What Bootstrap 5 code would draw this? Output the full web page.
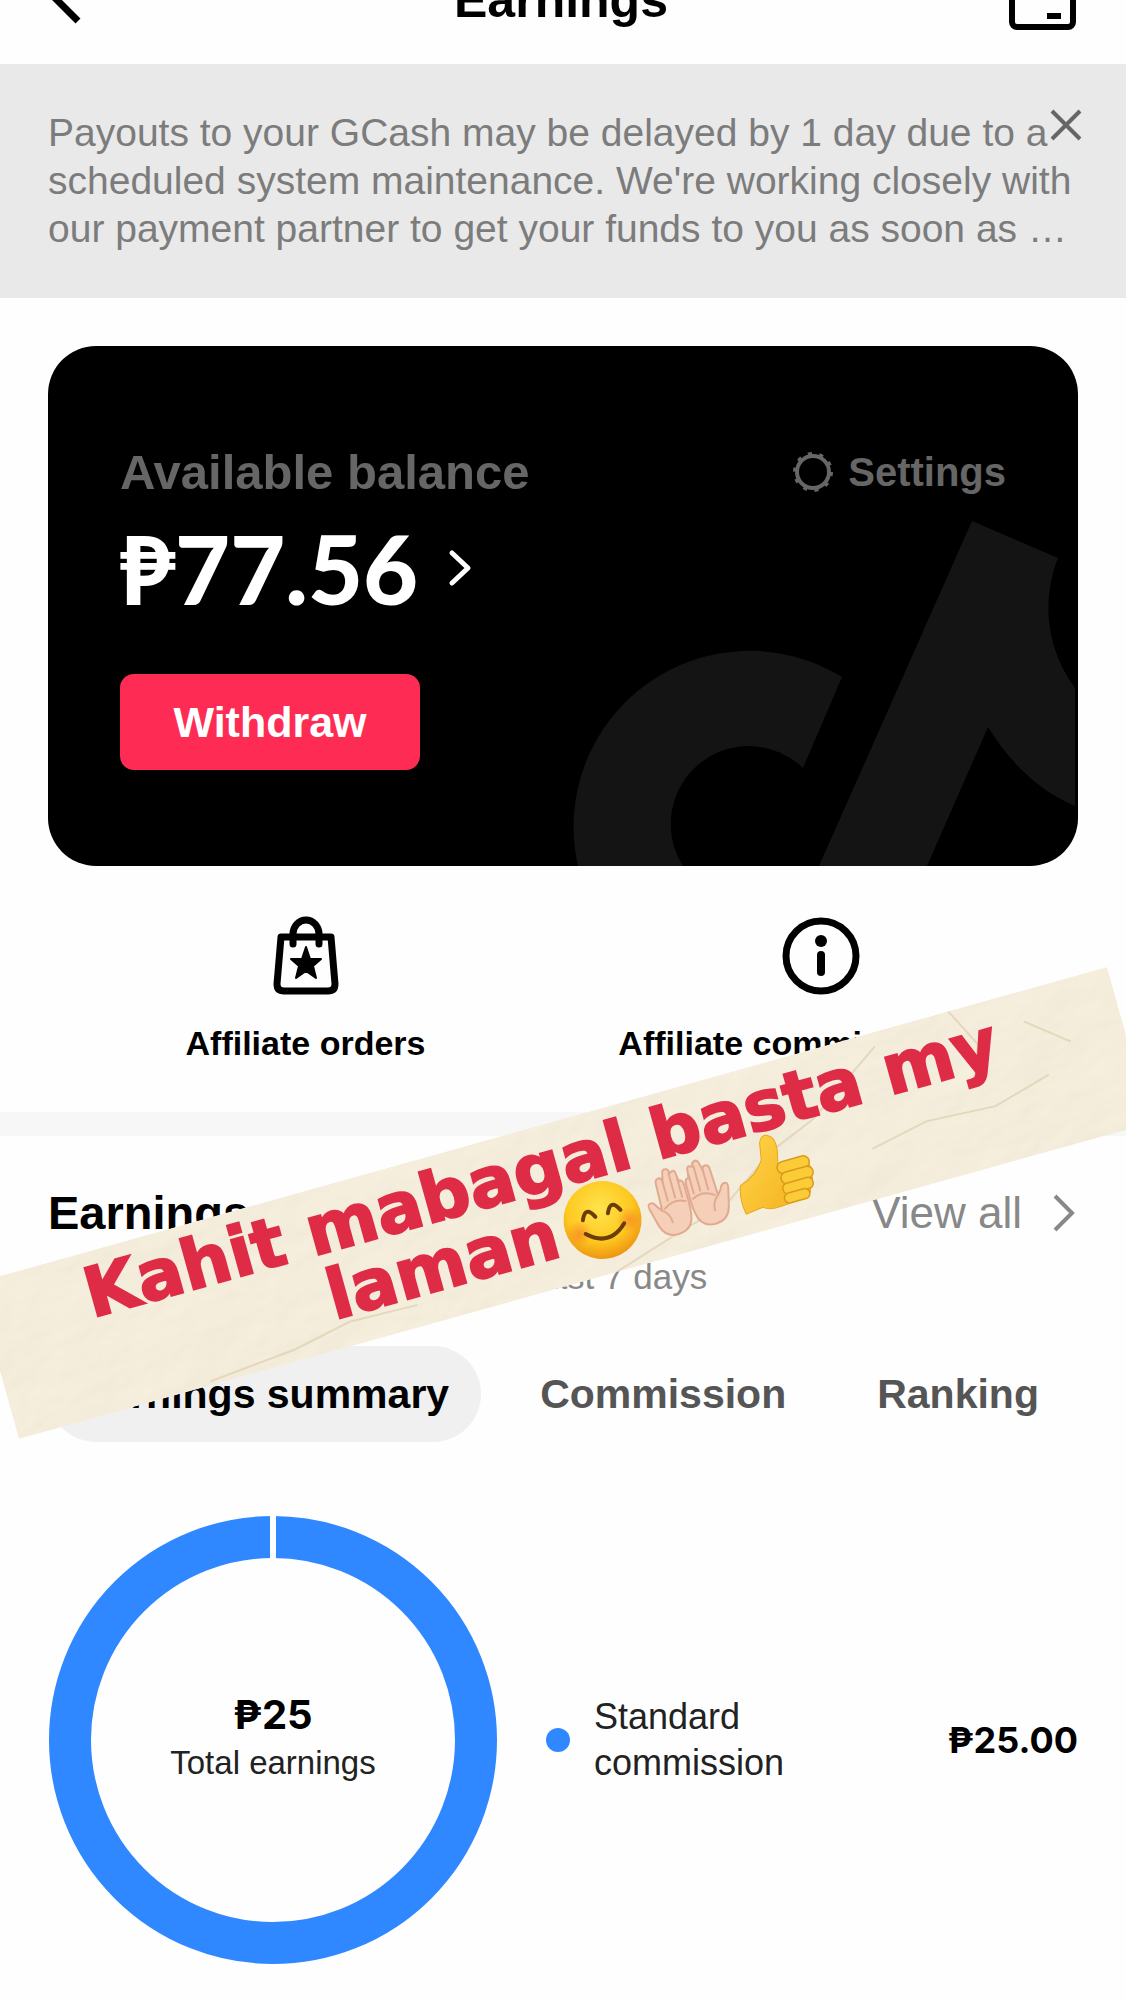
<!DOCTYPE html>
<html lang="en">
<head>
  <meta charset="UTF-8">
  <meta name="viewport" content="width=device-width, initial-scale=1">
  <title>Earnings</title>
  <link href="https://cdn.jsdelivr.net/npm/bootstrap@5.3.2/dist/css/bootstrap.min.css" rel="stylesheet">
  <style>
    body { background: #fefefe; color: #000; font-family: "Liberation Sans", Arial, sans-serif; }
    a { color: inherit; text-decoration: none; }
    svg { display: block; flex: none; }
    .gutter { padding-left: 48px; padding-right: 48px; }
    .plain-btn { background: none; border: 0; padding: 0; color: inherit; }

    .top-bar { height: 64px; padding-bottom: 34px; }
    .top-bar h1 { font-size: 50px; line-height: 60px; }

    .notice { background: #e9e9e9; color: #7c7c7c; padding-top: 45px; padding-bottom: 45px; font-size: 39px; line-height: 48px; }
    .notice-close { position: absolute; top: 44px; right: 43px; }

    .balance { background: #000; border-radius: 48px; margin-top: 48px; padding: 96px 72px; }
    .balance-art { position: absolute; right: 0; bottom: 0; }
    .balance-muted { color: #666; }
    .balance-label { font-size: 49px; line-height: 60px; }
    .balance-settings { font-size: 40px; line-height: 60px; gap: 14px; }
    .money { font-family: Inter, "Liberation Sans", sans-serif; font-weight: 700; }
    .balance-amount { font: 900 95px/100px Lato, "Liberation Sans", sans-serif; margin-top: 16px; gap: 30px; color: #fff; }
    .btn-withdraw { background: #fe2c55; color: #fff; border-radius: 14px; width: 300px; height: 96px; margin-top: 56px; font-size: 43px; }
    .btn-withdraw:hover { background: #e5284d; color: #fff; }

    .shortcuts { padding-top: 50px; padding-bottom: 47px; font-size: 34px; line-height: 44px; }
    .shortcuts a { gap: 25px; }
    .divider-band { height: 24px; background: #f7f7f7; }

    .section-title { font-size: 47px; line-height: 60px; }
    .section-head { padding-top: 47px; }
    .view-all { color: #888; font-size: 44px; line-height: 60px; gap: 30px; }
    .period { width: 64%; color: #888; font-size: 35px; line-height: 44px; margin-top: 12px; }

    .tabs { gap: 27px; margin-top: 47px; font-size: 41px; }
    .tabs button { height: 96px; padding: 2px 32px 0; border-radius: 48px; color: #555; font-weight: 700; white-space: nowrap; }
    .tabs .active { background: #f0f0f0; color: #000; }

    .summary { padding-top: 73px; padding-bottom: 37px; }
    .donut-label { position: absolute; inset: 0; }
    .donut-total { font-size: 40px; line-height: 46px; }
    .donut-caption { font-size: 33px; line-height: 50px; color: #222; }
    .legend { margin-left: 48px; gap: 24px; font-size: 36px; line-height: 46px; color: #222; }
    .legend-dot { width: 24px; height: 24px; background: #2f88ff; }
    .legend-amount { font-size: 36px; color: #000; }

    .tape { position: absolute; left: 50%; top: 1203px; width: 1175px; height: 162px; transform: translate(-50%, -50%) rotate(-15.6deg); }
    .tape-paper { position: absolute; inset: 0; width: 100%; height: 100%; }
    .tape-text { position: relative; color: #df2c46; font: 700 69px/70px "DejaVu Sans", sans-serif; text-align: center; -webkit-text-stroke: 2px #df2c46; }
    .tape-text .first-line { padding: 6px 24px 0 0; }
    .tape-text .emoji-row { gap: 7px; margin-top: -8px; }
  </style>
</head>
<body>
<main class="position-relative overflow-hidden">

  <header class="top-bar gutter d-flex justify-content-between align-items-end">
    <button class="plain-btn" type="button" aria-label="Back">
      <svg width="66" height="60" viewBox="0 0 66 60" fill="none" stroke="#000" stroke-width="7"><path d="M32 0 4 25 30 51"/></svg>
    </button>
    <h1 class="fw-bold mb-0">Earnings</h1>
    <button class="plain-btn" type="button" aria-label="Transactions">
      <svg width="70" height="60" viewBox="0 0 70 60" fill="none" stroke="#000" stroke-width="6"><rect x="4" y="4" width="61" height="53" rx="5"/><path d="M39 46h14"/></svg>
    </button>
  </header>

  <section class="notice gutter position-relative">
    <p class="mb-0">Payouts to your GCash may be delayed by 1 day due to a scheduled system maintenance. We're working closely with our payment partner to get your funds to you as soon as …</p>
    <button class="plain-btn notice-close" type="button" aria-label="Close">
      <svg width="34" height="34" viewBox="0 0 34 34" stroke="#666" stroke-width="4"><path d="M3 3l28 28M31 3L3 31"/></svg>
    </button>
  </section>

  <div class="gutter">
    <section class="balance position-relative overflow-hidden">
      <svg class="balance-art" width="510" height="350" viewBox="568 516 510 350" fill="#141414">
        <path d="M842 677A176 176 0 0 0 578 866H683A78 78 0 0 1 803 768Z"/>
        <path d="M972 521 1058 558C1048 583 1037 635 1075 688V806Q1024 785 988 727L927 866H819Z"/>
      </svg>
      <div class="position-relative">
        <div class="d-flex justify-content-between fw-bold balance-muted">
          <span class="balance-label">Available balance</span>
          <a href="#" class="balance-settings d-flex align-items-center">
            <svg width="42" height="42" viewBox="0 0 42 42" fill="none" stroke="#666">
              <circle cx="21" cy="21" r="16" stroke-width="4"/>
              <circle cx="21" cy="21" r="18" stroke-width="4" stroke-dasharray="4 7.31"/>
            </svg>
            Settings
          </a>
        </div>
        <a href="#" class="balance-amount d-inline-flex align-items-center">
          ₱77.56
          <svg width="24" height="38" viewBox="0 0 24 38" fill="none" stroke="#fff" stroke-width="5" stroke-linecap="round" stroke-linejoin="round"><path d="M4 4l16 15L4 34"/></svg>
        </a>
        <div><button class="btn btn-withdraw fw-bold" type="button">Withdraw</button></div>
      </div>
    </section>

    <nav class="shortcuts row g-0 fw-bold" aria-label="Affiliate">
      <div class="col-6">
        <a href="#" class="d-flex flex-column align-items-center">
          <svg width="80" height="80" viewBox="0 0 80 80" fill="none" stroke="#000" stroke-width="7" stroke-linejoin="round" stroke-linecap="round">
            <path d="M15 21H65L69 68Q69 75 62 75H18Q11 75 11 68Z"/>
            <path d="M27 28V18A13 14 0 0 1 53 18V28"/>
            <path d="M40 31 44 43 55 43 47 50 50 62 40 55 30 62 33 50 25 43 36 43Z" fill="#000" stroke-width="2"/>
          </svg>
          Affiliate orders
        </a>
      </div>
      <div class="col-6">
        <a href="#" class="d-flex flex-column align-items-center">
          <svg width="80" height="80" viewBox="0 0 80 80" fill="none" stroke="#000">
            <circle cx="40" cy="40" r="35" stroke-width="7"/>
            <circle cx="40" cy="25" r="6" fill="#000" stroke="none"/>
            <path d="M40 39V56" stroke-width="8" stroke-linecap="round"/>
          </svg>
          Affiliate commission info
        </a>
      </div>
    </nav>
  </div>

  <div class="divider-band"></div>

  <section class="gutter">
    <div class="section-head d-flex justify-content-between">
      <h2 class="section-title fw-bold mb-0">Earnings</h2>
      <a href="#" class="view-all d-flex align-items-center">
        View all
        <svg width="26" height="40" viewBox="0 0 26 40" fill="none" stroke="#888" stroke-width="4"><path d="M3 3l17 17L3 37"/></svg>
      </a>
    </div>
    <p class="period text-end mb-0">Last 7 days</p>

    <div class="tabs d-flex" role="tablist">
      <button class="plain-btn active" type="button" role="tab" aria-selected="true">Earnings summary</button>
      <button class="plain-btn" type="button" role="tab" aria-selected="false">Commission</button>
      <button class="plain-btn" type="button" role="tab" aria-selected="false">Ranking</button>
    </div>

    <div class="summary d-flex align-items-center">
      <div class="position-relative">
        <svg width="450" height="450" viewBox="0 0 450 450">
          <circle cx="225" cy="225" r="203" fill="none" stroke="#2f88ff" stroke-width="42"/>
          <path d="M225 0V46" stroke="#fefefe" stroke-width="6"/>
        </svg>
        <div class="donut-label d-flex flex-column align-items-center justify-content-center">
          <span class="donut-total money">₱25</span>
          <span class="donut-caption">Total earnings</span>
        </div>
      </div>
      <div class="legend d-flex align-items-center flex-grow-1">
        <span class="legend-dot rounded-circle"></span>
        <span>Standard<br>commission</span>
        <span class="legend-amount money ms-auto">₱25.00</span>
      </div>
    </div>
  </section>

  <!-- Paper strip laid across the page -->
  <aside class="tape">
    <svg class="tape-paper" viewBox="0 0 1175 162" preserveAspectRatio="none">
      <defs>
        <filter id="paperGrain" x="0" y="0" width="100%" height="100%">
          <feTurbulence type="fractalNoise" baseFrequency="0.01 0.014" numOctaves="4" seed="7" result="n"/>
          <feDiffuseLighting in="n" surfaceScale="3" lighting-color="#fbf3e0" diffuseConstant="1.1"><feDistantLight azimuth="60" elevation="62"/></feDiffuseLighting>
        </filter>
      </defs>
      <rect width="1175" height="162" fill="#f3ecdb"/>
      <rect width="1175" height="162" filter="url(#paperGrain)" opacity=".35"/>
      <g fill="none" stroke="#d8c9a8" stroke-width="2" opacity=".6">
        <path d="M200 158 290 150 350 138 420 140M620 162 700 138 742 128 800 88 850 68 930 14"/>
        <path d="M900 112 960 100 1030 104 1090 88M1010 0 1030 40 1018 70M1080 30 1120 62"/>
      </g>
    </svg>
    <div class="tape-text">
      <div class="first-line">Kahit mabagal basta my</div>
      <div class="emoji-row d-flex justify-content-center align-items-center">
        <span>laman</span>
        <svg width="80" height="80" viewBox="0 0 80 80" role="img" aria-label="smiling face">
          <defs>
            <radialGradient id="face" cx=".5" cy=".35" r=".65"><stop offset="0" stop-color="#ffe44d"/><stop offset=".65" stop-color="#fdc820"/><stop offset="1" stop-color="#ed9411"/></radialGradient>
            <radialGradient id="cheek"><stop offset="0" stop-color="#f8652a" stop-opacity=".5"/><stop offset="1" stop-color="#f8652a" stop-opacity="0"/></radialGradient>
          </defs>
          <circle cx="40" cy="40" r="39" fill="url(#face)"/>
          <circle cx="14" cy="47" r="13" fill="url(#cheek)"/>
          <circle cx="66" cy="47" r="13" fill="url(#cheek)"/>
          <path d="M21 35Q27 21 34 35M47 35Q53 21 60 35" fill="none" stroke="#6b3d08" stroke-width="4" stroke-linecap="round"/>
          <path d="M20 49Q40 68 60 49" fill="none" stroke="#6b3d08" stroke-width="4" stroke-linecap="round"/>
        </svg>
        <svg width="84" height="80" viewBox="0 0 84 80" role="img" aria-label="palms up together">
          <defs>
            <g id="palm">
              <path d="M40 58Q38 74 22 74Q10 74 6 62L1 42Q0 37 4 37Q7 37 9 42L13 47L14 20Q14 15 18 15Q21 15 21 20L23 11Q24 7 27 8Q30 8 30 13L32 12Q36 10 36 16L37 23Q41 22 41 28V45Q41 52 40 58Z" fill="#f6cfb9" stroke="#e0aa90" stroke-width="2" stroke-linejoin="round"/>
              <path d="M21 20V39M29 13V38M36 20V39M13 47Q20 52 20 61M16 46Q27 38 38 44" fill="none" stroke="#e0aa90" stroke-width="2" stroke-linecap="round"/>
            </g>
          </defs>
          <use href="#palm"/>
          <use href="#palm" transform="matrix(-1 0 0 1 84 0)"/>
        </svg>
        <svg width="80" height="80" viewBox="0 0 80 80" role="img" aria-label="thumbs up">
          <defs><linearGradient id="thumb" x2="1" y2="1"><stop offset="0" stop-color="#ffd84b"/><stop offset="1" stop-color="#f3ae1b"/></linearGradient></defs>
          <path d="M4 44Q22 39 31 25L34 8Q37 0 44 3Q51 7 49 20L46 33H68Q77 34 75 41Q79 46 75 52Q77 59 71 62Q72 71 62 73L38 75Q26 76 20 71L2 73Q-1 58 4 44Z" fill="url(#thumb)" stroke="#e9a51d" stroke-width="1"/>
          <g fill="#fccb38" stroke="#dc9a1c" stroke-width="1.5">
            <rect x="44" y="32" width="33" height="12" rx="6"/><rect x="45" y="43" width="33" height="12" rx="6"/><rect x="44" y="54" width="31" height="11" rx="5"/><rect x="43" y="64" width="26" height="10" rx="5"/>
          </g>
        </svg>
      </div>
    </div>
  </aside>

</main>
<script src="https://cdn.jsdelivr.net/npm/bootstrap@5.3.2/dist/js/bootstrap.bundle.min.js"></script>
</body>
</html>
